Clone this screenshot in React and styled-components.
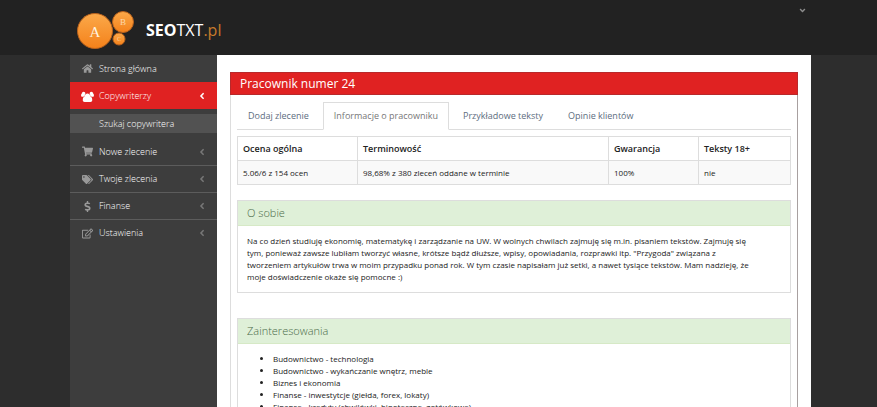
import React, { useState } from 'react'
import styled, { createGlobalStyle, ThemeProvider } from 'styled-components'
import {
  FaHome,
  FaShoppingCart,
  FaTags,
  FaDollarSign,
  FaRegEdit,
  FaAngleLeft,
  FaAngleDown
} from 'react-icons/fa'

const theme = {
  red: '#e02222',
  redBorder: '#b8292b',
  dark: '#222222',
  sidebar: '#3d3d3d',
  line: '#dddddd',
  green: '#dff0d8',
  greenBorder: '#d6e9c6'
}

const GroupIcon = () => (
  <svg
    width='13'
    height='12'
    viewBox='0 0 1920 1792'
    fill='currentColor'
    aria-hidden='true'
  >
    <path d='M593 896q-162 5-265 128H194q-82 0-138-40.500T0 865q0-353 124-353 6 0 43.500 21t97.500 42.500T384 597q67 0 133-23-5 37-5 66 0 139 81 256zm1071 637q0 120-73 189.500t-194 69.500H523q-121 0-194-69.500T256 1533q0-53 3.500-103.500t14-109T300 1212t43-97.500 62-81 85.500-53.500T602 960q10 0 43 21.500t73 48 107 48 135 21.500 135-21.500 107-48 73-48 43-21.500q61 0 111.500 20t85.500 53.500 62 81 43 97.500 26.500 108.500 14 109 3.500 103.500zM640 512q0 106-75 181t-181 75-181-75-75-181 75-181 181-75 181 75 75 181zm704 384q0 159-112.500 271.500T960 1280 688.500 1167.500 576 896t112.500-271.500T960 512t271.500 112.500T1344 896zm576-31q0 78-56 118.500T1726 1024h-134q-103-123-265-128 81-117 81-256 0-29-5-66 66 23 133 23 59 0 119-21.500t97.500-42.500 43.500-21q124 0 124 353zm-128-353q0 106-75 181t-181 75-181-75-75-181 75-181 181-75 181 75 75 181z' />
  </svg>
)

const menu = [
  { label: 'Strona główna', icon: FaHome },
  {
    label: 'Copywriterzy',
    icon: GroupIcon,
    active: true,
    arrow: true,
    children: ['Szukaj copywritera']
  },
  { label: 'Nowe zlecenie', icon: FaShoppingCart, arrow: true },
  { label: 'Twoje zlecenia', icon: FaTags, arrow: true },
  { label: 'Finanse', icon: FaDollarSign, arrow: true },
  { label: 'Ustawienia', icon: FaRegEdit, arrow: true }
]

const tabs = [
  'Dodaj zlecenie',
  'Informacje o pracowniku',
  'Przykładowe teksty',
  'Opinie klientów'
]

const interests = [
  'Budownictwo - technologia',
  'Budownictwo - wykańczanie wnętrz, meble',
  'Biznes i ekonomia',
  'Finanse - inwestytcje (giełda, forex, lokaty)',
  'Finanse - kredyty (chwilówki, hipoteczne, gotówkowe)'
]

const Logo = () => (
  <LogoLink href='#' aria-label='SEOTXT.pl'>
    <svg width='59' height='38' viewBox='0 0 59 38' aria-hidden='true'>
      <defs>
        <linearGradient id='orange' x1='0' y1='0' x2='0' y2='1'>
          <stop offset='0' stopColor='#fba94a' />
          <stop offset='1' stopColor='#f4811a' />
        </linearGradient>
      </defs>
      <g fill='url(#orange)' stroke='#b8611c'>
        <circle cx='19' cy='20' r='17.5' />
        <circle cx='47' cy='11' r='10.5' />
        <circle cx='43' cy='28' r='6' />
      </g>
      <g
        fill='#fff3df'
        fontFamily='"Liberation Sans Narrow", "Liberation Serif", serif'
        textAnchor='middle'
      >
        <text x='19' y='26' fontSize='15'>
          A
        </text>
        <text x='47' y='14' fontSize='9' opacity='0.7'>
          B
        </text>
        <text x='43' y='30' fontSize='6' opacity='0.6'>
          C
        </text>
      </g>
    </svg>
    <LogoText>
      <b>SEO</b>TXT<span>.pl</span>
    </LogoText>
  </LogoLink>
)

const Sidebar = () => (
  <SidebarNav>
    <MenuList>
      {menu.map(({ label, icon: Icon, active, arrow, children }) => (
        <li key={label}>
          <MenuLink href='#' $active={active}>
            <Icon />
            <span>{label}</span>
            {arrow && <FaAngleLeft />}
          </MenuLink>
          {children && (
            <SubMenu>
              {children.map(child => (
                <li key={child}>
                  <SubLink href='#'>{child}</SubLink>
                </li>
              ))}
            </SubMenu>
          )}
        </li>
      ))}
    </MenuList>
  </SidebarNav>
)

const App = () => {
  const [tab, setTab] = useState(1)

  return (
    <ThemeProvider theme={theme}>
      <GlobalStyle />
      <Page>
        <Header>
          <Logo />
          <UserButton type='button' aria-label='Menu'>
            <FaAngleDown />
          </UserButton>
        </Header>
        <Columns>
          <Sidebar />
          <Content>
            <PortletTitle>Pracownik numer 24</PortletTitle>
            <PortletBody>
              <TabBar role='tablist'>
                {tabs.map((label, i) => (
                  <Tab
                    key={label}
                    type='button'
                    role='tab'
                    aria-selected={i === tab}
                    $active={i === tab}
                    onClick={() => setTab(i)}
                  >
                    {label}
                  </Tab>
                ))}
              </TabBar>
              <Table>
                <colgroup>
                  <Col $width='120px' />
                  <Col />
                  <Col $width='90px' />
                  <Col $width='92px' />
                </colgroup>
                <thead>
                  <tr>
                    <th>Ocena ogólna</th>
                    <th>Terminowość</th>
                    <th>Gwarancja</th>
                    <th>Teksty 18+</th>
                  </tr>
                </thead>
                <tbody>
                  <tr>
                    <td>5.06/6 z 154 ocen</td>
                    <td>98,68% z 380 zleceń oddane w terminie</td>
                    <td>100%</td>
                    <td>nie</td>
                  </tr>
                </tbody>
              </Table>
              <Panel>
                <PanelTitle>O sobie</PanelTitle>
                <PanelText>
                  Na co dzień studiuję ekonomię, matematykę i zarządzanie na UW.
                  W wolnych chwilach zajmuję się m.in. pisaniem tekstów. Zajmuję
                  się tym, ponieważ zawsze lubiłam tworzyć własne, krótsze bądź
                  dłuższe, wpisy, opowiadania, rozprawki itp. "Przygoda"
                  związana z tworzeniem artykułów trwa w moim przypadku ponad
                  rok. W tym czasie napisałam już setki, a nawet tysiące
                  tekstów. Mam nadzieję, że moje doświadczenie okaże się pomocne
                  :)
                </PanelText>
              </Panel>
              <Panel>
                <PanelTitle>Zainteresowania</PanelTitle>
                <PanelList>
                  {interests.map(item => (
                    <li key={item}>{item}</li>
                  ))}
                </PanelList>
              </Panel>
            </PortletBody>
          </Content>
        </Columns>
      </Page>
    </ThemeProvider>
  )
}

const GlobalStyle = createGlobalStyle`
  * {
    box-sizing: border-box;
  }

  body {
    margin: 0;
    background: #2d2d2d;
    color: #222;
    font: 8px/12px 'Open Sans', sans-serif;
  }

  ul {
    margin: 0;
    padding: 0;
    list-style: none;
  }

  a {
    text-decoration: none;
  }
`

const Page = styled.div`
  display: flex;
  flex-direction: column;
  height: 100vh;
  overflow: hidden;
`

const Header = styled.header`
  display: flex;
  flex: none;
  justify-content: space-between;
  height: 55px;
  padding: 0 66px 0 76px;
  background: ${props => props.theme.dark};
`

const LogoLink = styled.a`
  display: flex;
  align-items: center;
  gap: 11px;
  padding-top: 5px;
  color: #fff;
`

const LogoText = styled.span`
  font-size: 16px;
  line-height: 24px;

  b {
    font-weight: 700;
  }

  span {
    color: #c77a2b;
  }
`

const UserButton = styled.button`
  align-self: flex-start;
  display: flex;
  margin-top: 6px;
  padding: 0 4px;
  border: 0;
  background: none;
  color: #8c8c8c;
  font-size: 9px;
`

const Columns = styled.div`
  display: grid;
  flex: 1;
  grid-template-columns: 147px 1fr;
  min-height: 0;
  padding: 0 66px 0 70px;
`

const SidebarNav = styled.nav`
  background: ${props => props.theme.sidebar};
`

const MenuList = styled.ul`
  > li + li + li + li {
    border-top: 1px solid #5c5c5c;
  }
`

const MenuLink = styled.a`
  display: grid;
  grid-template-columns: 12px 1fr 10px;
  align-items: center;
  gap: 6px;
  height: 27px;
  padding: 0 10px 0 11px;
  background: ${props => (props.$active ? props.theme.red : 'none')};
  color: #fff;
  font-size: 9px;
  font-weight: 300;

  li + li + li + li > & {
    height: 26px;
  }

  svg {
    justify-self: center;
    color: ${props => (props.$active ? '#fff' : '#999')};
    font-size: 11px;
  }

  svg:last-child {
    color: ${props => (props.$active ? '#fff' : '#777')};
    font-size: 10px;
  }
`

const SubMenu = styled.ul`
  padding: 5px 0;
`

const SubLink = styled.a`
  display: block;
  padding: 0 29px;
  background: #525252;
  color: #fff;
  font-size: 9px;
  font-weight: 300;
  line-height: 19px;
`

const Content = styled.main`
  padding: 17px 13px 0;
  background: #fff;
`

const PortletTitle = styled.h1`
  margin: 0;
  padding: 0 9px;
  border: 1px solid ${props => props.theme.redBorder};
  background: ${props => props.theme.red};
  color: #fff;
  font-size: 12px;
  font-weight: 400;
  line-height: 21px;
`

const PortletBody = styled.div`
  padding: 7px 6px;
  border: 1px solid ${props => props.theme.line};
  border-top: 0;
  border-right-color: #a8a0a0;
`

const TabBar = styled.div`
  display: flex;
  gap: 3px;
  margin-bottom: 6px;
  border-bottom: 1px solid ${props => props.theme.line};
`

const Tab = styled.button`
  margin-bottom: -1px;
  padding: 0 10px;
  border: 1px solid transparent;
  border-color: ${props =>
    props.$active ? '#ddd #ddd #fff' : 'transparent transparent #ddd'};
  background: ${props => (props.$active ? '#fff' : 'none')};
  color: ${props => (props.$active ? '#777' : '#5d6d80')};
  font: 9px/26px 'Open Sans', sans-serif;
`

const Table = styled.table`
  width: 100%;
  margin-bottom: 15px;
  border: 1px solid ${props => props.theme.line};
  border-collapse: collapse;
  table-layout: fixed;

  th,
  td {
    height: 24px;
    padding: 0 5px;
    border: 1px solid ${props => props.theme.line};
    text-align: left;
  }

  th {
    font-size: 9px;
    font-weight: 600;
  }

  td {
    background: #f9f9f9;
  }
`

const Col = styled.col`
  width: ${props => props.$width || 'auto'};
`

const Panel = styled.section`
  margin-bottom: 25px;
  border: 1px solid ${props => props.theme.line};
`

const PanelTitle = styled.h2`
  margin: 0;
  padding: 0 9px;
  border-bottom: 1px solid ${props => props.theme.greenBorder};
  background: ${props => props.theme.green};
  color: #4b6b48;
  font-size: 11px;
  font-weight: 300;
  line-height: 24px;
`

const PanelText = styled.p`
  margin: 0;
  padding: 9px 28px 9px 9px;
`

const PanelList = styled.ul`
  padding: 9px 9px 9px 35px;
  list-style: disc;
`

export default App
